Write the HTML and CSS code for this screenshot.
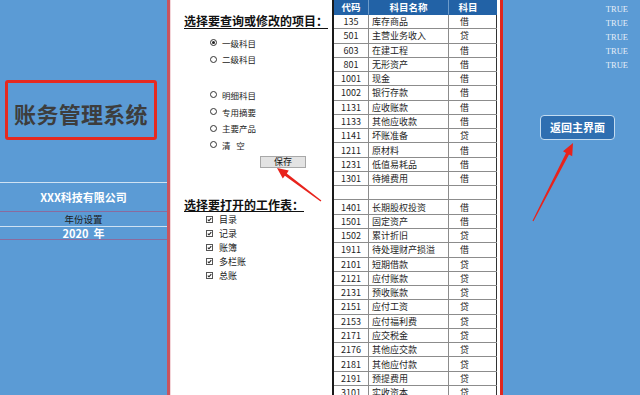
FILE: index.html
```html
<!DOCTYPE html>
<html lang="zh">
<head>
<meta charset="utf-8">
<title>账务管理系统</title>
<link rel="stylesheet" href="styles.css">
</head>
<body>
<div class="page">
  <aside class="left">
    <div class="title-box">账务管理系统</div>
    <div class="company">XXX科技有限公司</div>
    <div class="year-label">年份设置</div>
    <div class="year">2020&nbsp; 年</div>
  </aside>

  <main class="form">
    <h2 class="heading h1">选择要查询或修改的项目：</h2>
    <ul class="radios group1">
      <li><span class="radio on"></span>一级科目</li>
      <li><span class="radio"></span>二级科目</li>
    </ul>
    <ul class="radios group2">
      <li><span class="radio"></span>明细科目</li>
      <li><span class="radio"></span>专用摘要</li>
      <li><span class="radio"></span>主要产品</li>
      <li><span class="radio"></span>清&nbsp;&nbsp; 空</li>
    </ul>
    <button class="save">保存</button>
    <h2 class="heading h2">选择要打开的工作表：</h2>
    <ul class="checks">
      <li><svg class="cb" viewBox="0 0 7 7"><rect x="0.5" y="0.5" width="6" height="6" fill="#fff" stroke="#555"/><polyline points="1.8,3.6 3,4.8 5.3,2.2" fill="none" stroke="#222" stroke-width="1.1"/></svg>目录</li>
      <li><svg class="cb" viewBox="0 0 7 7"><rect x="0.5" y="0.5" width="6" height="6" fill="#fff" stroke="#555"/><polyline points="1.8,3.6 3,4.8 5.3,2.2" fill="none" stroke="#222" stroke-width="1.1"/></svg>记录</li>
      <li><svg class="cb" viewBox="0 0 7 7"><rect x="0.5" y="0.5" width="6" height="6" fill="#fff" stroke="#555"/><polyline points="1.8,3.6 3,4.8 5.3,2.2" fill="none" stroke="#222" stroke-width="1.1"/></svg>账簿</li>
      <li><svg class="cb" viewBox="0 0 7 7"><rect x="0.5" y="0.5" width="6" height="6" fill="#fff" stroke="#555"/><polyline points="1.8,3.6 3,4.8 5.3,2.2" fill="none" stroke="#222" stroke-width="1.1"/></svg>多栏账</li>
      <li><svg class="cb" viewBox="0 0 7 7"><rect x="0.5" y="0.5" width="6" height="6" fill="#fff" stroke="#555"/><polyline points="1.8,3.6 3,4.8 5.3,2.2" fill="none" stroke="#222" stroke-width="1.1"/></svg>总账</li>
    </ul>
  </main>

  <section class="accounts">
    <div class="grid">
      <div class="hd">代码</div><div class="hd">科目名称</div><div class="hd dir">科目</div>
      <div class="c">135</div><div class="n">库存商品</div><div class="d">借</div>
      <div class="c">501</div><div class="n">主营业务收入</div><div class="d">贷</div>
      <div class="c">603</div><div class="n">在建工程</div><div class="d">借</div>
      <div class="c">801</div><div class="n">无形资产</div><div class="d">借</div>
      <div class="c">1001</div><div class="n">现金</div><div class="d">借</div>
      <div class="c">1002</div><div class="n">银行存款</div><div class="d">借</div>
      <div class="c">1131</div><div class="n">应收账款</div><div class="d">借</div>
      <div class="c">1133</div><div class="n">其他应收款</div><div class="d">借</div>
      <div class="c">1141</div><div class="n">坏账准备</div><div class="d">贷</div>
      <div class="c">1211</div><div class="n">原材料</div><div class="d">借</div>
      <div class="c">1231</div><div class="n">低值易耗品</div><div class="d">借</div>
      <div class="c">1301</div><div class="n">待摊费用</div><div class="d">借</div>
      <div class="c"></div><div class="n"></div><div class="d"></div>
      <div class="c">1401</div><div class="n">长期股权投资</div><div class="d">借</div>
      <div class="c">1501</div><div class="n">固定资产</div><div class="d">借</div>
      <div class="c">1502</div><div class="n">累计折旧</div><div class="d">贷</div>
      <div class="c">1911</div><div class="n">待处理财产损溢</div><div class="d">借</div>
      <div class="c">2101</div><div class="n">短期借款</div><div class="d">贷</div>
      <div class="c">2121</div><div class="n">应付账款</div><div class="d">贷</div>
      <div class="c">2131</div><div class="n">预收账款</div><div class="d">贷</div>
      <div class="c">2151</div><div class="n">应付工资</div><div class="d">贷</div>
      <div class="c">2153</div><div class="n">应付福利费</div><div class="d">贷</div>
      <div class="c">2171</div><div class="n">应交税金</div><div class="d">贷</div>
      <div class="c">2176</div><div class="n">其他应交款</div><div class="d">贷</div>
      <div class="c">2181</div><div class="n">其他应付款</div><div class="d">贷</div>
      <div class="c">2191</div><div class="n">预提费用</div><div class="d">贷</div>
      <div class="c">3101</div><div class="n">实收资本</div><div class="d">贷</div>
    </div>
  </section>

  <aside class="right">
    <ul class="flags">
      <li>TRUE</li><li>TRUE</li><li>TRUE</li><li>TRUE</li><li>TRUE</li>
    </ul>
    <button class="back">返回主界面</button>
  </aside>

  <svg class="arrows" viewBox="0 0 640 395" width="640" height="395">
    <polygon fill="#e8231c" points="277,168 288.8,170.6 286.8,173.4 321.4,200.5 320.6,201.5 284.9,175.8 282.8,178.6"/>
    <polygon fill="#e8231c" points="573,143 572.2,156.2 569,154.6 533.5,221.3 532.5,220.8 566,152.9 563,151.2"/>
  </svg>
</div>
</body>
</html>
```

FILE: styles.css
```css
html, body {
  margin: 0;
  padding: 0;
  background: #fff;
}
body {
  font-family: "Noto Sans CJK SC", "Noto Sans", sans-serif;
}
.page {
  position: relative;
  display: flex;
  width: 640px;
  height: 395px;
  overflow: hidden;
}

/* left panel */
.left {
  width: 167px;
  flex: none;
  background: #5b9bd5;
  border-right: 3px solid #c9545e;
  display: flex;
  flex-direction: column;
}
.title-box {
  margin: 80px 0 0 5px;
  width: 152px;
  height: 60px;
  box-sizing: border-box;
  border: 3px solid #e62a20;
  border-radius: 3px;
  padding-top: 5px;
  display: flex;
  align-items: center;
  justify-content: center;
  font-size: 22px;
  font-weight: 700;
  color: #3d3d3d;
  letter-spacing: 0.3px;
}
.company {
  margin-top: 42px;
  height: 28px;
  line-height: 28px;
  border-top: 1px solid #cfe2f3;
  border-bottom: 1px solid #8a6b9e;
  text-align: center;
  color: #fff;
  font-size: 11px;
  font-weight: 700;
}
.year-label {
  height: 14px;
  line-height: 14px;
  border-bottom: 1px solid #cfe2f3;
  text-align: center;
  color: #1e1e1e;
  font-size: 9.5px;
}
.year {
  height: 12px;
  line-height: 12px;
  border-bottom: 1px solid #8a6b9e;
  text-align: center;
  color: #fff;
  font-size: 11px;
  font-weight: 700;
}

/* form */
.form {
  width: 162px;
  flex: none;
  box-sizing: border-box;
  padding-left: 13px;
  background: #fff;
  border-left: 1px solid #f4d6da;
  display: flex;
  flex-direction: column;
  align-items: flex-start;
}
.heading {
  margin: 0;
  font-size: 12px;
  font-weight: 700;
  color: #111;
  border-bottom: 1px solid #111;
  white-space: nowrap;
}
.heading.h1 {
  margin-top: 14px;
  line-height: 14px;
}
.heading.h2 {
  margin-top: 30.5px;
  line-height: 13px;
}
.radios, .checks {
  list-style: none;
  margin: 0;
  padding: 0;
}
.radios {
  padding-left: 26px;
}
.radios li {
  height: 16.7px;
  display: flex;
  align-items: center;
  gap: 5px;
  font-size: 8.5px;
  color: #222;
}
.group1 { margin-top: 5.3px; }
.group2 { margin-top: 18.9px; }
.radio {
  width: 7px;
  height: 7px;
  box-sizing: border-box;
  border: 1px solid #333;
  border-radius: 50%;
  background: #fff;
  display: flex;
  align-items: center;
  justify-content: center;
}
.radio.on::after {
  content: "";
  width: 3px;
  height: 3px;
  border-radius: 50%;
  background: #222;
}
.save {
  margin: 2.5px 0 0 76px;
  width: 46px;
  height: 12px;
  padding: 0;
  box-sizing: border-box;
  border: 1px solid #a8a8a8;
  background: #e3e3e3;
  font-family: inherit;
  font-size: 9px;
  line-height: 10px;
  color: #111;
}
.checks {
  padding-left: 22px;
}
.checks li {
  height: 14.15px;
  display: flex;
  align-items: center;
  gap: 6px;
  font-size: 9px;
  color: #222;
}
.cb {
  width: 7px;
  height: 7px;
  flex: none;
}

/* accounts table */
.accounts {
  width: 165px;
  flex: none;
  background: #fff;
  padding-right: 3px;
}
.grid {
  display: grid;
  grid-template-columns: 35px 80px 48px;
  grid-template-rows: 15px;
  grid-auto-rows: 14.27px;
  border-left: 2px solid #1a1a1a;
  border-right: 1px solid #333;
  font-size: 9px;
  color: #1e1e1e;
}
.grid > div {
  box-sizing: border-box;
  border-bottom: 1px solid #8c8c8c;
  border-right: 1px solid #8c8c8c;
  display: flex;
  align-items: center;
  white-space: nowrap;
  overflow: hidden;
}
.grid > div:nth-child(3n) {
  border-right: none;
}
.grid .hd {
  background: #2262a6;
  color: #fff;
  font-weight: 700;
  font-size: 9.5px;
  justify-content: center;
  border-bottom-color: #2262a6;
  border-right-color: #6d9ccc;
}
.grid .hd.dir {
  padding-right: 10px;
}
.grid .c {
  justify-content: center;
}
.grid .n {
  padding-left: 3px;
}
.grid .d {
  justify-content: center;
  padding-right: 17px;
}

/* right panel */
.right {
  flex: 1;
  background: #5b9bd5;
  border-left: 3px solid #e0261e;
  display: flex;
  flex-direction: column;
  align-items: flex-start;
}
.flags {
  list-style: none;
  margin: 0;
  padding: 2.3px 12px 0 0;
  align-self: stretch;
  text-align: right;
}
.flags li {
  height: 14px;
  line-height: 14px;
  font-family: "Liberation Serif", serif;
  font-size: 8.5px;
  color: #e6eef8;
}
.back {
  margin: 42.7px 0 0 37px;
  width: 75px;
  height: 25px;
  box-sizing: border-box;
  padding: 0;
  border: 1.5px solid #c3dcf1;
  border-radius: 4px;
  background: #2f6fb1;
  color: #fff;
  font-family: inherit;
  font-size: 11px;
  font-weight: 700;
}

/* overlay arrows */
.arrows {
  position: absolute;
  left: 0;
  top: 0;
  pointer-events: none;
}
```
